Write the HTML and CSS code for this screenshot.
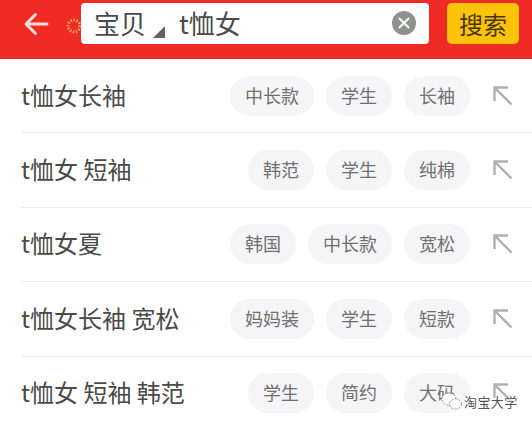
FILE: index.html
```html
<!DOCTYPE html>
<html lang="zh">
<head>
<meta charset="utf-8">
<title>搜索</title>
<link rel="stylesheet" href="styles.css">
</head>
<body>
<header class="bar">
  <svg class="back" width="26" height="24" viewBox="0 0 26 24"><path d="M24 12H3M12.500 2.500 3 12l9.500 9.500" fill="none" stroke="#fde0d8" stroke-width="3" stroke-linecap="round" stroke-linejoin="round"/></svg>
  <svg class="spark" width="16" height="16" viewBox="0 0 16 16"><circle cx="8" cy="8" r="6" fill="none" stroke="#f2a25a" stroke-width="3" stroke-dasharray="1.500 1.500"/></svg>
  <div class="search">
    <span class="scope">宝贝</span>
    <svg class="tri" width="12" height="12" viewBox="0 0 12 12"><path d="M12 0V12H0Z" fill="#5f6468"/></svg>
    <span class="query">t恤女</span>
    <span class="clear"><svg width="12" height="12" viewBox="0 0 12 12"><path d="M1.500 1.500l9 9M10.500 1.500l-9 9" stroke="#fff" stroke-width="2" stroke-linecap="round"/></svg></span>
  </div>
  <button class="go">搜索</button>
</header>
<main>
  <div class="row"><span class="title">t恤女长袖</span><span class="pill">中长款</span><span class="pill">学生</span><span class="pill">长袖</span><svg class="arrow" width="20" height="20" viewBox="0 0 20 20"><path d="M1.500 15V1.500H15M1.500 1.500 18.500 18.500" fill="none" stroke="#b0b0b2" stroke-width="2.400"/></svg></div>
  <div class="row"><span class="title">t恤女 短袖</span><span class="pill">韩范</span><span class="pill">学生</span><span class="pill">纯棉</span><svg class="arrow" width="20" height="20" viewBox="0 0 20 20"><path d="M1.500 15V1.500H15M1.500 1.500 18.500 18.500" fill="none" stroke="#b0b0b2" stroke-width="2.400"/></svg></div>
  <div class="row"><span class="title">t恤女夏</span><span class="pill">韩国</span><span class="pill">中长款</span><span class="pill">宽松</span><svg class="arrow" width="20" height="20" viewBox="0 0 20 20"><path d="M1.500 15V1.500H15M1.500 1.500 18.500 18.500" fill="none" stroke="#b0b0b2" stroke-width="2.400"/></svg></div>
  <div class="row"><span class="title">t恤女长袖 宽松</span><span class="pill">妈妈装</span><span class="pill">学生</span><span class="pill">短款</span><svg class="arrow" width="20" height="20" viewBox="0 0 20 20"><path d="M1.500 15V1.500H15M1.500 1.500 18.500 18.500" fill="none" stroke="#b0b0b2" stroke-width="2.400"/></svg></div>
  <div class="row"><span class="title">t恤女 短袖 韩范</span><span class="pill">学生</span><span class="pill">简约</span><span class="pill">大码</span><svg class="arrow" width="20" height="20" viewBox="0 0 20 20"><path d="M1.500 15V1.500H15M1.500 1.500 18.500 18.500" fill="none" stroke="#b0b0b2" stroke-width="2.400"/></svg></div>
</main>
<div class="mark">
  <svg width="24" height="20" viewBox="0 0 24 20"><ellipse cx="9" cy="8" rx="7" ry="6" fill="#fff" stroke="#8a8a8a" stroke-dasharray="2 1.500"/><ellipse cx="15.500" cy="13" rx="6" ry="5" fill="#fff" stroke="#8a8a8a" stroke-dasharray="2 1.500"/></svg>
  <span>淘宝大学</span>
</div>
</body>
</html>
```
FILE: styles.css
```css
* { box-sizing: border-box; }
html, body { margin: 0; height: 426px; overflow: hidden; }
body {
  position: relative;
  background: #fff;
  font-family: "Noto Sans CJK SC", "Noto Sans", sans-serif;
  color: #333;
}
.bar {
  height: 59px;
  background: #f02a24;
  display: flex;
  align-items: flex-start;
  padding: 3px 13px 0 23px;
}
.back { margin-top: 9px; flex: none; }
.spark { margin: 15px 0 0 17px; flex: none; }
.search {
  width: 348px;
  height: 41px;
  margin-left: -1px;
  background: #fff;
  border-radius: 4px;
  display: flex;
  align-items: center;
  padding: 0 13px;
  font-size: 26px;
  color: #4a4a4a;
}
.scope { line-height: 41px; margin-bottom: 3px; }
.tri { margin: 16px 0 0 7px; flex: none; }
.query { margin: 0 0 3px 14px; flex: 1; line-height: 41px; }
.clear {
  width: 24px;
  height: 24px;
  margin-bottom: 1px;
  border-radius: 50%;
  background: #8f918f;
  display: flex;
  align-items: center;
  justify-content: center;
}
.go {
  width: 72px;
  height: 41px;
  margin-left: 18px;
  border: 0;
  border-radius: 5px;
  background: #fdc307;
  color: #4a3306;
  font: 24px/41px "Noto Sans CJK SC", sans-serif;
  padding: 0 0 2px;
}
.row {
  height: 74.4px;
  margin-left: 21px;
  display: flex;
  align-items: center;
  gap: 12px;
  border-bottom: 1px solid #ebebed;
  padding-right: 19px;
}
.title { flex: 1; font-size: 24px; color: #4a4a4a; white-space: nowrap; margin-bottom: 3px; }
.pill {
  height: 40px;
  padding: 0 15px;
  border-radius: 20px;
  background: #f5f5f7;
  color: #707070;
  font-size: 18px;
  line-height: 38px;
  white-space: nowrap;
}
.arrow { margin-left: 11px; flex: none; }
.mark {
  position: absolute;
  left: 440px;
  top: 391px;
  display: flex;
  align-items: center;
  font-size: 13px;
  letter-spacing: 0.4px;
  color: #555;
  text-shadow: 0 0 2px #fff, 0 0 2px #fff, 0 0 3px #fff;
}
```
